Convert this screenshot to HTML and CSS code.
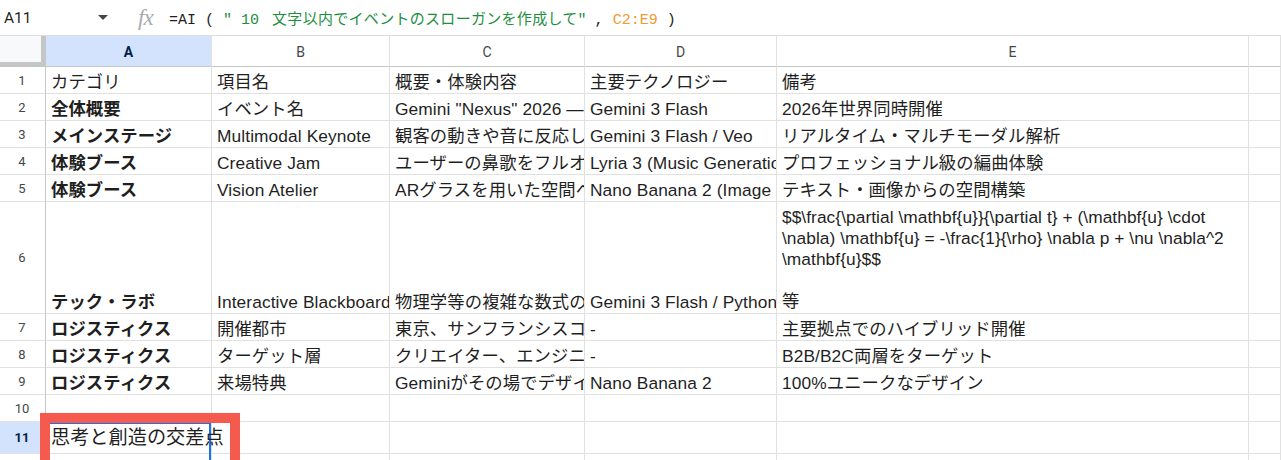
FILE: index.html
```html
<!DOCTYPE html>
<html lang="ja">
<head>
<meta charset="utf-8">
<title>Sheet</title>
<link rel="stylesheet" href="styles.css">
</head>
<body>
<div class="app">
  <div class="formula-bar">
    <div class="namebox">
      <span class="ref">A11</span>
      <svg class="caret" width="10" height="5" viewBox="0 0 10 5"><polygon points="0,0 10,0 5,5" fill="#444746"/></svg>
    </div>
    <div class="fx">fx</div>
    <div class="formula">=AI ( <span class="str">" 10 <span class="jp">文字以内でイベントのスローガンを作成して</span>"</span><span class="sep">, </span><span class="rng">C2:E9</span> )</div>
  </div>

  <div class="sheet">
    <div class="corner"></div>
    <div class="ch sel">A</div>
    <div class="ch">B</div>
    <div class="ch">C</div>
    <div class="ch">D</div>
    <div class="ch">E</div>
    <div class="ch"></div>

    <div class="rh">1</div>
    <div class="c">カテゴリ</div>
    <div class="c">項目名</div>
    <div class="c">概要・体験内容</div>
    <div class="c">主要テクノロジー</div>
    <div class="c">備考</div>
    <div class="c"></div>

    <div class="rh">2</div>
    <div class="c b">全体概要</div>
    <div class="c">イベント名</div>
    <div class="c">Gemini "Nexus" 2026 — 思考と創造の交差点</div>
    <div class="c">Gemini 3 Flash</div>
    <div class="c">2026年世界同時開催</div>
    <div class="c"></div>

    <div class="rh">3</div>
    <div class="c b">メインステージ</div>
    <div class="c">Multimodal Keynote</div>
    <div class="c">観客の動きや音に反応して変化するステージ演出</div>
    <div class="c">Gemini 3 Flash / Veo</div>
    <div class="c">リアルタイム・マルチモーダル解析</div>
    <div class="c"></div>

    <div class="rh">4</div>
    <div class="c b">体験ブース</div>
    <div class="c">Creative Jam</div>
    <div class="c">ユーザーの鼻歌をフルオーケストラに編曲</div>
    <div class="c">Lyria 3 (Music Generation)</div>
    <div class="c">プロフェッショナル級の編曲体験</div>
    <div class="c"></div>

    <div class="rh">5</div>
    <div class="c b">体験ブース</div>
    <div class="c">Vision Atelier</div>
    <div class="c">ARグラスを用いた空間への描画体験</div>
    <div class="c">Nano Banana 2 (Image Generation)</div>
    <div class="c">テキスト・画像からの空間構築</div>
    <div class="c"></div>

    <div class="rh">6</div>
    <div class="c b">テック・ラボ</div>
    <div class="c">Interactive Blackboard</div>
    <div class="c">物理学等の複雑な数式の解説</div>
    <div class="c">Gemini 3 Flash / Python</div>
    <div class="c wrap">$$\frac{\partial \mathbf{u}}{\partial t} + (\mathbf{u} \cdot<br>\nabla) \mathbf{u} = -\frac{1}{\rho} \nabla p + \nu \nabla^2<br>\mathbf{u}$$<br><br>等</div>
    <div class="c"></div>

    <div class="rh">7</div>
    <div class="c b">ロジスティクス</div>
    <div class="c">開催都市</div>
    <div class="c">東京、サンフランシスコ、ロンドン</div>
    <div class="c">-</div>
    <div class="c">主要拠点でのハイブリッド開催</div>
    <div class="c"></div>

    <div class="rh">8</div>
    <div class="c b">ロジスティクス</div>
    <div class="c">ターゲット層</div>
    <div class="c">クリエイター、エンジニア、学生</div>
    <div class="c">-</div>
    <div class="c">B2B/B2C両層をターゲット</div>
    <div class="c"></div>

    <div class="rh">9</div>
    <div class="c b">ロジスティクス</div>
    <div class="c">来場特典</div>
    <div class="c">Geminiがその場でデザインしたグッズ</div>
    <div class="c">Nano Banana 2</div>
    <div class="c">100%ユニークなデザイン</div>
    <div class="c"></div>

    <div class="rh">10</div>
    <div class="c"></div>
    <div class="c"></div>
    <div class="c"></div>
    <div class="c"></div>
    <div class="c"></div>
    <div class="c"></div>

    <div class="rh sel">11</div>
    <div class="c active">
      <div class="editor">思考と創造の交差点</div>
    </div>
    <div class="c"></div>
    <div class="c"></div>
    <div class="c"></div>
    <div class="c"></div>
    <div class="c"></div>

    <div class="rh">12</div>
    <div class="c"></div>
    <div class="c"></div>
    <div class="c"></div>
    <div class="c"></div>
    <div class="c"></div>
    <div class="c"></div>
  </div>

  <div class="annot"></div>
</div>
</body>
</html>
```

FILE: styles.css
```css
html, body {
  margin: 0;
  padding: 0;
  height: 460px;
  overflow: hidden;
  background: #ffffff;
}

.app {
  position: relative;
  width: 1281px;
  height: 460px;
  overflow: hidden;
  font-family: "Liberation Sans", Arial, "Noto Sans CJK JP", sans-serif;
  color: #1f1f1f;
}

/* ---------- formula bar ---------- */
.formula-bar {
  display: flex;
  align-items: center;
  height: 35px;
  border-bottom: 1px solid #dadce0;
}

.namebox {
  display: flex;
  align-items: center;
  width: 138px;
  padding-left: 4px;
  box-sizing: border-box;
}

.ref {
  font-family: Roboto, "Liberation Sans", sans-serif;
  font-size: 15.5px;
  color: #1f1f1f;
  width: 94px;
}

.caret {
  display: block;
}

.fx {
  width: 31px;
  font-family: "Liberation Serif", "DejaVu Serif", serif;
  font-style: italic;
  font-size: 23px;
  color: #a8abaf;
  letter-spacing: -1px;
  line-height: 1;
}

.formula {
  font-family: "Liberation Mono", "Noto Sans CJK JP", monospace;
  font-size: 15px;
  color: #1f1f1f;
  white-space: nowrap;
}

.str { color: #1e8e3e; }
.rng { color: #f29a2e; }

.jp {
  margin-left: 4px;
  letter-spacing: 0.3px;
}

.sep {
  margin-left: 8px;
}

/* ---------- sheet grid ---------- */
.sheet {
  display: grid;
  grid-template-columns: 46px 166px 178px 195px 192px 472px 1fr;
  grid-template-rows: 31px repeat(5, 27px) 112px repeat(4, 27px) 32px 27px;
}

.corner {
  background: #f8f9fa;
  border-right: 5px solid #c4c7c5;
  border-bottom: 5px solid #c4c7c5;
  box-sizing: border-box;
}

.ch {
  box-sizing: border-box;
  display: flex;
  align-items: center;
  justify-content: center;
  border-right: 1px solid #e1e1e1;
  border-bottom: 1px solid #c4c7c5;
  font-family: Roboto, "Liberation Sans", sans-serif;
  font-size: 14px;
  color: #444746;
  padding-top: 1px;
}

.rh {
  box-sizing: border-box;
  display: flex;
  align-items: center;
  justify-content: center;
  border-right: 1px solid #c4c7c5;
  border-bottom: 1px solid #e1e1e1;
  font-family: Roboto, "Liberation Sans", sans-serif;
  font-size: 13px;
  color: #444746;
  padding-right: 1px;
}

.sel {
  background: #d3e3fd;
  color: #041e49;
  font-weight: bold;
}

.c {
  box-sizing: border-box;
  display: flex;
  align-items: flex-end;
  overflow: hidden;
  white-space: nowrap;
  border-right: 1px solid #e1e1e1;
  border-bottom: 1px solid #e1e1e1;
  padding: 0 5px 0 5px;
  font-size: 17.33px;
  line-height: 21px;
  letter-spacing: 0.1px;
  color: #1f1f1f;
}

.b { font-weight: bold; }

.wrap {
  display: block;
  padding-top: 5px;
  white-space: normal;
  letter-spacing: 0.05px;
}

.active {
  position: relative;
  overflow: visible;
  z-index: 2;
}

.editor {
  position: absolute;
  left: -1px;
  top: 0;
  width: 166px;
  height: 42px;
  box-sizing: border-box;
  border: 2px solid #1a73e8;
  padding: 1px 0 0 4px;
  font-size: 19.2px;
  line-height: 26px;
  letter-spacing: 0;
  white-space: nowrap;
  color: #1f1f1f;
}

/* ---------- annotation ---------- */
.annot {
  position: absolute;
  left: 40px;
  top: 413px;
  width: 200px;
  height: 60px;
  box-sizing: border-box;
  border: 10px solid #f45b4e;
  z-index: 5;
  pointer-events: none;
}
```
